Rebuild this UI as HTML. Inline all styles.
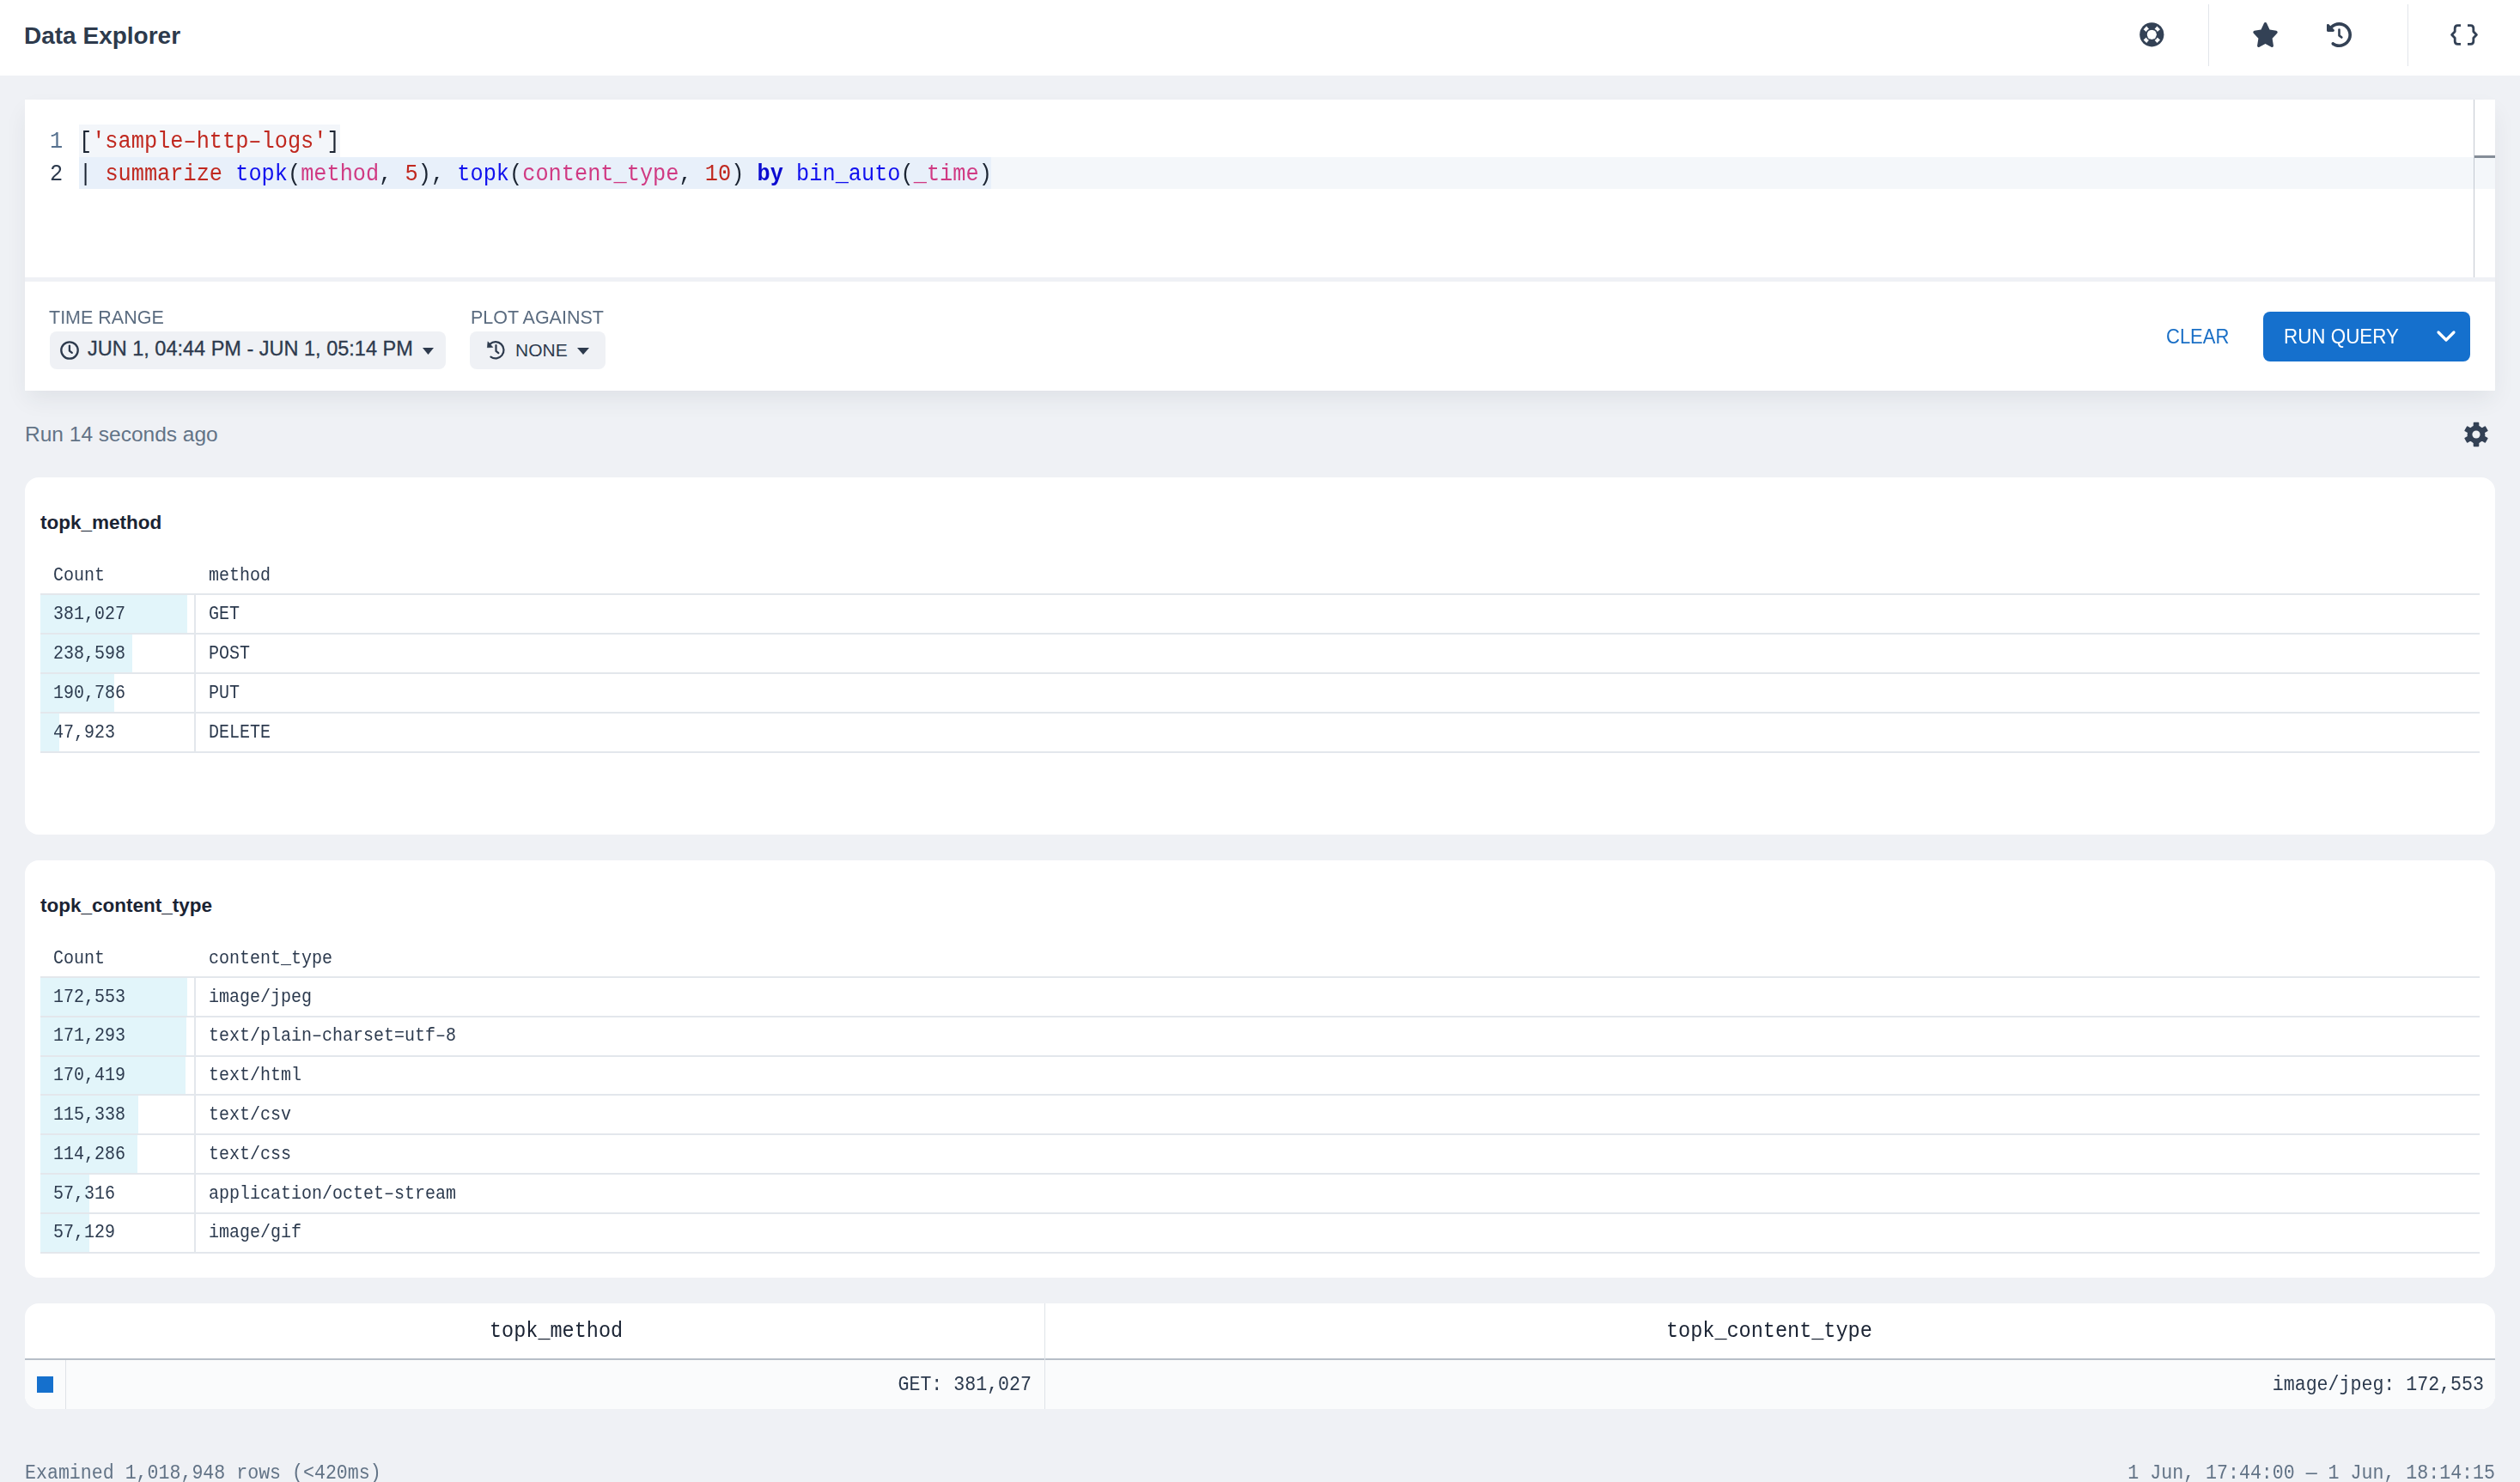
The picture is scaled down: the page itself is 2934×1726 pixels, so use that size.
<!DOCTYPE html>
<html><head><meta charset="utf-8">
<style>
*{margin:0;padding:0;box-sizing:border-box}
html,body{width:2934px;height:1726px;overflow:hidden;background:#eff1f5}
body{position:relative;font-family:"Liberation Sans",sans-serif;color:#2d3748}
.a{position:absolute}
.t{position:absolute;white-space:nowrap;line-height:1}
.m{font-family:"Liberation Mono",monospace;transform:scaleY(1.08);transform-origin:0 76.61%}
svg{position:absolute;overflow:visible}
</style></head><body>
<div class="a" style="left:0px;top:0px;width:2934px;height:88px;background:#fff;"></div>
<div class="t" style="left:28px;top:27.69px;font-size:28px;color:#2d3a4c;font-weight:bold;">Data Explorer</div>
<div class="a" style="left:2571px;top:5px;width:1px;height:72px;background:#e1e5ea;"></div>
<div class="a" style="left:2803px;top:5px;width:1px;height:72px;background:#e1e5ea;"></div>
<svg style="left:2491px;top:26px" width="29" height="29" viewBox="0 0 29 29">
<circle cx="14.3" cy="14.3" r="14.1" fill="#334155"/>
<circle cx="14.3" cy="14.3" r="5.6" fill="#fff"/>
<g fill="#fff">
<path d="M4.6 8.2L8.2 4.6L12.0 9.0L9.0 12.0Z"/>
<path d="M24.0 8.2L20.4 4.6L16.6 9.0L19.6 12.0Z"/>
<path d="M4.6 20.4L8.2 24.0L12.0 19.6L9.0 16.6Z"/>
<path d="M24.0 20.4L20.4 24.0L16.6 19.6L19.6 16.6Z"/>
</g><circle cx="14.3" cy="14.3" r="6.6" fill="none" stroke="#334155" stroke-width="1.6"/></svg>
<svg style="left:2621.5px;top:26px" width="31" height="29" viewBox="0 0 576 512" preserveAspectRatio="none">
<path fill="#334155" d="M316.9 18C311.6 7 300.4 0 288.1 0s-23.4 7-28.8 18L195 150.3 51.4 171.5c-12 1.8-22 10.2-25.7 21.7s-.7 24.2 7.9 32.7L137.8 329 113.2 474.7c-2 12 3 24.2 12.9 31.3s23 8 33.8 2.3l128.3-68.5 128.3 68.5c10.8 5.7 23.9 4.9 33.8-2.3s14.9-19.3 12.9-31.3L438.5 329 542.7 225.9c8.6-8.5 11.7-21.2 7.9-32.7s-13.7-19.9-25.7-21.7L381.2 150.3 316.9 18z"/></svg>
<svg style="left:2709px;top:26px" width="29" height="29" viewBox="0 0 512 512"><path fill="#334155" d="M75 75L41 41C25.9 25.9 0 36.6 0 57.9V168c0 13.3 10.7 24 24 24H134.1c21.4 0 32.1-25.9 17-41l-30.8-30.8C155 85.5 203 64 256 64c106 0 192 86 192 192s-86 192-192 192c-40.8 0-78.6-12.7-109.7-34.4c-14.5-10.1-34.4-6.6-44.6 7.9s-6.6 34.4 7.9 44.6C151.2 495 201.7 512 256 512c141.4 0 256-114.6 256-256S397.4 0 256 0C185.3 0 121.3 28.7 75 75z"/><path d="M256 150V272L306 310" fill="none" stroke="#334155" stroke-width="46" stroke-linecap="round" stroke-linejoin="round"/></svg>
<svg style="left:2853px;top:28px" width="32" height="25" viewBox="0 0 32 25" fill="none" stroke="#334155" stroke-width="2.8" stroke-linecap="butt" stroke-linejoin="round">
<path d="M12 1.6H8.6C6.5 1.6 5.2 2.9 5.2 5V8.7L1.6 12.5L5.2 16.3V20C5.2 22.1 6.5 23.4 8.6 23.4H12"/>
<path d="M20 1.6H23.4C25.5 1.6 26.8 2.9 26.8 5V8.7L30.4 12.5L26.8 16.3V20C26.8 22.1 25.5 23.4 23.4 23.4H20"/>
</svg>
<div class="a" style="left:29px;top:116px;width:2876px;height:339px;box-shadow:0 12px 26px -3px rgba(40,50,70,0.08)"></div>
<div class="a" style="left:29px;top:116px;width:2876px;height:207px;background:#fff;"></div>
<div class="a" style="left:29px;top:328px;width:2876px;height:127px;background:#fff;"></div>
<div class="a" style="left:92px;top:145px;width:304px;height:38px;background:#f3f6fa;"></div>
<div class="a" style="left:92px;top:183px;width:2813px;height:37px;background:#f4f7fa;"></div>
<div class="a" style="left:92px;top:183px;width:1062px;height:37px;background:#e8f0fa;"></div>
<div class="a" style="left:2880px;top:116px;width:1px;height:207px;background:#c3c9d1;"></div>
<div class="a" style="left:2881px;top:181px;width:24px;height:3px;background:#858d98;"></div>
<div class="t m" style="left:58px;top:152.62px;font-size:25.3px;color:#56718f;">1</div>
<div class="t m" style="left:58px;top:190.62px;font-size:25.3px;color:#2d3a4d;">2</div>
<div class="t m" style="left:92px;top:152.62px;font-size:25.3px;color:#1b2432;"><span style="color:#1b2432">[</span><span style="color:#c0281f">'sample&#8211;http&#8211;logs'</span><span style="color:#1b2432">]</span></div>
<div class="t m" style="left:92px;top:190.62px;font-size:25.3px;color:#1b2432;white-space:pre"><span style="color:#1b2432">| </span><span style="color:#c0281f">summarize</span> <span style="color:#1010ee">topk</span><span style="color:#1b2432">(</span><span style="color:#d03a83">method</span><span style="color:#1b2432">, </span><span style="color:#c0281f">5</span><span style="color:#1b2432">), </span><span style="color:#1010ee">topk</span><span style="color:#1b2432">(</span><span style="color:#d03a83">content_type</span><span style="color:#1b2432">, </span><span style="color:#c0281f">10</span><span style="color:#1b2432">) </span><span style="color:#0b0bd0;font-weight:bold">by</span> <span style="color:#1010ee">bin_auto</span><span style="color:#1b2432">(</span><span style="color:#d03a83">_time</span><span style="color:#1b2432">)</span></div>
<div class="t" style="left:57px;top:360.30px;font-size:21.5px;color:#5b6c80;transform:scaleY(1.04);transform-origin:0 84.67%;">TIME RANGE</div>
<div class="t" style="left:548px;top:360.30px;font-size:21.5px;color:#5b6c80;transform:scaleY(1.04);transform-origin:0 84.67%;">PLOT AGAINST</div>
<div class="a" style="left:58px;top:386px;width:461px;height:44px;background:#eff1f5;border-radius:8px"></div>
<div class="a" style="left:547px;top:386px;width:158px;height:44px;background:#eff1f5;border-radius:8px"></div>
<svg style="left:70px;top:397px" width="22" height="22" viewBox="0 0 22 22" fill="none" stroke="#2d3a4d" stroke-width="2.3" stroke-linecap="round" stroke-linejoin="round">
<circle cx="11" cy="11" r="9.7"/><path d="M10.9 5.6V11.6L13.8 13.9"/></svg>
<div class="t" style="left:102px;top:395.10px;font-size:23.5px;color:#2d3a4d;-webkit-text-stroke:0.3px #2d3a4d">JUN 1, 04:44 PM - JUN 1, 05:14 PM</div>
<svg style="left:492px;top:405px" width="13" height="8" viewBox="0 0 13 8"><path d="M0 0H13L6.5 8Z" fill="#2d3a4d"/></svg>
<svg style="left:560px;top:390px" width="40" height="35" viewBox="0 0 40 35">
<path d="M10.6 10.55A9.6 9.6 0 1 1 11.46 25.71" fill="none" stroke="#2d3a4d" stroke-width="2.2" stroke-linecap="round"/>
<path d="M8.0 7.8L7.4 14.8L13.8 14.4Z" fill="#2d3a4d" stroke="#2d3a4d" stroke-width="0.6" stroke-linejoin="round"/>
<path d="M17.5 12V18.9L20.3 21.2" fill="none" stroke="#2d3a4d" stroke-width="2.2" stroke-linecap="round" stroke-linejoin="round"/>
</svg>
<div class="t" style="left:600px;top:397.22px;font-size:21px;color:#2d3a4d;">NONE</div>
<svg style="left:672px;top:405px" width="14" height="8" viewBox="0 0 14 8"><path d="M0 0H14L7 8Z" fill="#2d3a4d"/></svg>
<div class="t" style="left:2522px;top:381.87px;font-size:22px;color:#1a6fc6;transform:scaleY(1.1);transform-origin:0 84.67%;">CLEAR</div>
<div class="a" style="left:2635px;top:363px;width:241px;height:58px;background:#1570cd;border-radius:8px"></div>
<div class="t" style="left:2659px;top:381.53px;font-size:22.4px;color:#fff;transform:scaleY(1.1);transform-origin:0 84.67%;">RUN QUERY</div>
<svg style="left:2837px;top:385px" width="22" height="13" viewBox="0 0 22 13" fill="none" stroke="#fff" stroke-width="3.2" stroke-linecap="round" stroke-linejoin="round"><path d="M2 2L11 11L20 2"/></svg>
<div class="t" style="left:29px;top:494.26px;font-size:24.5px;color:#627386;">Run 14 seconds ago</div>
<svg style="left:2869px;top:491.5px" width="28" height="28" viewBox="-14 -14 28 28">
<defs><mask id="gm"><rect x="-20" y="-20" width="40" height="40" fill="#fff"/><circle r="4.6" fill="#000"/></mask></defs>
<g fill="#334155" mask="url(#gm)">
<circle r="10.4"/>
<rect x="-3.3" y="-14.2" width="6.6" height="28.4" rx="1"/>
<rect x="-3.3" y="-14.2" width="6.6" height="28.4" rx="1" transform="rotate(60)"/>
<rect x="-3.3" y="-14.2" width="6.6" height="28.4" rx="1" transform="rotate(120)"/>
</g></svg>
<div class="a" style="left:29px;top:556px;width:2876px;height:416px;background:#fff;border-radius:16px"></div>
<div class="t" style="left:47px;top:597.95px;font-size:22.5px;color:#1a2333;font-weight:bold;">topk_method</div>
<div class="t m" style="left:62px;top:660.68px;font-size:20px;color:#2c3a4e;">Count</div>
<div class="t m" style="left:243px;top:660.68px;font-size:20px;color:#2c3a4e;">method</div>
<div class="a" style="left:47px;top:691px;width:2840px;height:2px;background:#e3e7ec;"></div>
<div class="a" style="left:47px;top:693px;width:171.0px;height:44px;background:#e2f5fa;"></div>
<div class="a" style="left:47px;top:737px;width:2840px;height:2px;background:#e3e7ec;"></div>
<div class="t m" style="left:62px;top:705.68px;font-size:20px;color:#2c3a4e;">381,027</div>
<div class="t m" style="left:243px;top:705.68px;font-size:20px;color:#2c3a4e;">GET</div>
<div class="a" style="left:47px;top:739px;width:107.1px;height:44px;background:#e2f5fa;"></div>
<div class="a" style="left:47px;top:783px;width:2840px;height:2px;background:#e3e7ec;"></div>
<div class="t m" style="left:62px;top:751.68px;font-size:20px;color:#2c3a4e;">238,598</div>
<div class="t m" style="left:243px;top:751.68px;font-size:20px;color:#2c3a4e;">POST</div>
<div class="a" style="left:47px;top:785px;width:85.6px;height:44px;background:#e2f5fa;"></div>
<div class="a" style="left:47px;top:829px;width:2840px;height:2px;background:#e3e7ec;"></div>
<div class="t m" style="left:62px;top:797.68px;font-size:20px;color:#2c3a4e;">190,786</div>
<div class="t m" style="left:243px;top:797.68px;font-size:20px;color:#2c3a4e;">PUT</div>
<div class="a" style="left:47px;top:831px;width:21.5px;height:44px;background:#e2f5fa;"></div>
<div class="a" style="left:47px;top:875px;width:2840px;height:2px;background:#e3e7ec;"></div>
<div class="t m" style="left:62px;top:843.68px;font-size:20px;color:#2c3a4e;">47,923</div>
<div class="t m" style="left:243px;top:843.68px;font-size:20px;color:#2c3a4e;">DELETE</div>
<div class="a" style="left:226px;top:693px;width:2px;height:182px;background:#e3e7ec;"></div>
<div class="a" style="left:29px;top:1002px;width:2876px;height:486px;background:#fff;border-radius:16px"></div>
<div class="t" style="left:47px;top:1043.95px;font-size:22.5px;color:#1a2333;font-weight:bold;">topk_content_type</div>
<div class="t m" style="left:62px;top:1106.68px;font-size:20px;color:#2c3a4e;">Count</div>
<div class="t m" style="left:243px;top:1106.68px;font-size:20px;color:#2c3a4e;">content_type</div>
<div class="a" style="left:47px;top:1137px;width:2840px;height:2px;background:#e3e7ec;"></div>
<div class="a" style="left:47px;top:1139px;width:171.0px;height:44px;background:#e2f5fa;"></div>
<div class="a" style="left:47px;top:1183px;width:2840px;height:2px;background:#e3e7ec;"></div>
<div class="t m" style="left:62px;top:1151.68px;font-size:20px;color:#2c3a4e;">172,553</div>
<div class="t m" style="left:243px;top:1151.68px;font-size:20px;color:#2c3a4e;">image/jpeg</div>
<div class="a" style="left:47px;top:1185px;width:169.8px;height:44px;background:#e2f5fa;"></div>
<div class="a" style="left:47px;top:1229px;width:2840px;height:2px;background:#e3e7ec;"></div>
<div class="t m" style="left:62px;top:1197.48px;font-size:20px;color:#2c3a4e;">171,293</div>
<div class="t m" style="left:243px;top:1197.48px;font-size:20px;color:#2c3a4e;">text/plain&#8211;charset=utf&#8211;8</div>
<div class="a" style="left:47px;top:1231px;width:168.9px;height:44px;background:#e2f5fa;"></div>
<div class="a" style="left:47px;top:1274px;width:2840px;height:2px;background:#e3e7ec;"></div>
<div class="t m" style="left:62px;top:1243.28px;font-size:20px;color:#2c3a4e;">170,419</div>
<div class="t m" style="left:243px;top:1243.28px;font-size:20px;color:#2c3a4e;">text/html</div>
<div class="a" style="left:47px;top:1276px;width:114.3px;height:44px;background:#e2f5fa;"></div>
<div class="a" style="left:47px;top:1320px;width:2840px;height:2px;background:#e3e7ec;"></div>
<div class="t m" style="left:62px;top:1289.08px;font-size:20px;color:#2c3a4e;">115,338</div>
<div class="t m" style="left:243px;top:1289.08px;font-size:20px;color:#2c3a4e;">text/csv</div>
<div class="a" style="left:47px;top:1322px;width:113.3px;height:44px;background:#e2f5fa;"></div>
<div class="a" style="left:47px;top:1366px;width:2840px;height:2px;background:#e3e7ec;"></div>
<div class="t m" style="left:62px;top:1334.88px;font-size:20px;color:#2c3a4e;">114,286</div>
<div class="t m" style="left:243px;top:1334.88px;font-size:20px;color:#2c3a4e;">text/css</div>
<div class="a" style="left:47px;top:1368px;width:56.8px;height:44px;background:#e2f5fa;"></div>
<div class="a" style="left:47px;top:1412px;width:2840px;height:2px;background:#e3e7ec;"></div>
<div class="t m" style="left:62px;top:1380.68px;font-size:20px;color:#2c3a4e;">57,316</div>
<div class="t m" style="left:243px;top:1380.68px;font-size:20px;color:#2c3a4e;">application/octet&#8211;stream</div>
<div class="a" style="left:47px;top:1414px;width:56.6px;height:44px;background:#e2f5fa;"></div>
<div class="a" style="left:47px;top:1458px;width:2840px;height:2px;background:#e3e7ec;"></div>
<div class="t m" style="left:62px;top:1426.48px;font-size:20px;color:#2c3a4e;">57,129</div>
<div class="t m" style="left:243px;top:1426.48px;font-size:20px;color:#2c3a4e;">image/gif</div>
<div class="a" style="left:226px;top:1139px;width:2px;height:319px;background:#e3e7ec;"></div>
<div class="a" style="left:29px;top:1518px;width:2876px;height:123px;background:#fff;border-radius:16px;overflow:hidden">
<div class="a" style="left:0;top:66px;width:2876px;height:57px;background:#fafbfc"></div>
<div class="a" style="left:0;top:64px;width:2876px;height:2px;background:#b7bec8"></div>
<div class="a" style="left:47px;top:66px;width:1px;height:57px;background:#dfe3e8"></div>
<div class="a" style="left:1187px;top:0;width:1px;height:123px;background:#dfe3e8"></div>
</div>
<div class="a" style="left:43px;top:1603px;width:19px;height:19px;background:#1570cd;"></div>
<div class="t m" style="left:570px;top:1539.00px;font-size:23.5px;color:#1a2333;">topk_method</div>
<div class="t m" style="left:1940px;top:1539.00px;font-size:23.5px;color:#1a2333;">topk_content_type</div>
<div class="t m" style="right:1733px;top:1603.45px;font-size:21.6px;color:#2c3a4e;">GET: 381,027</div>
<div class="t m" style="right:42px;top:1603.45px;font-size:21.6px;color:#2c3a4e;">image/jpeg: 172,553</div>
<div class="t m" style="left:29px;top:1706.45px;font-size:21.6px;color:#627386;">Examined 1,018,948 rows (&lt;420ms)</div>
<div class="t m" style="right:29px;top:1706.45px;font-size:21.6px;color:#627386;">1 Jun, 17:44:00 — 1 Jun, 18:14:15</div>
</body></html>
